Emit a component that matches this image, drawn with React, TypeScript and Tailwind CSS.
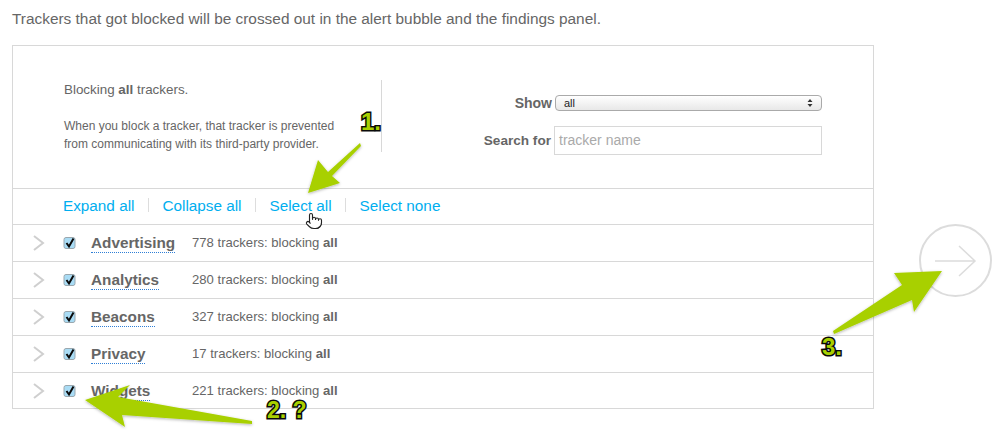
import { Pointer } from "lucide-react";

const categories = [
  { name: "Advertising", count: 778 },
  { name: "Analytics", count: 280 },
  { name: "Beacons", count: 327 },
  { name: "Privacy", count: 17 },
  { name: "Widgets", count: 221 },
];

const actions = ["Expand all", "Collapse all", "Select all", "Select none"];

function CheckBox() {
  return (
    <svg width="13" height="14" viewBox="0 0 13 14" className="shrink-0">
      <rect x="1" y="1.5" width="11" height="11" rx="2" fill="#a9dcf5" stroke="#9aa7ae" />
      <path d="M3.5 7 L6 10.5 L10.5 2.5" fill="none" stroke="#0a0a0a" strokeWidth="2" />
    </svg>
  );
}

function CategoryRow({ name, count }: { name: string; count: number }) {
  return (
    <div className="flex items-center h-[37px] border-t border-[#d8d8d8] last:h-[36px]">
      <svg width="14" height="18" viewBox="0 0 14 18" className="ml-[19px] shrink-0">
        <path d="M2 2 L11 9 L2 16" fill="none" stroke="#cfcfcf" strokeWidth="2" />
      </svg>
      <div className="ml-[17px]">
        <CheckBox />
      </div>
      <div className="ml-[15px] w-[101px]">
        <span className="text-[15.3px] font-bold text-[#666] border-b border-dotted border-[#2f7fd6] leading-[19px] inline-block">
          {name}
        </span>
      </div>
      <span className="text-[13.1px] text-[#666]">
        {count} trackers: blocking <b>all</b>
      </span>
    </div>
  );
}

function NumberLabel({ text, className }: { text: string; className: string }) {
  return (
    <span
      className={`absolute font-bold text-[#a8d000] leading-none [-webkit-text-stroke:3px_#0a0a0a] [paint-order:stroke_fill] ${className}`}
    >
      {text}
    </span>
  );
}

export default function App() {
  return (
    <div className="relative w-[1000px] h-[437px] overflow-hidden bg-white font-['Liberation_Sans',Arial,sans-serif] text-[#666]">
      <p className="pl-3 pt-[9px] text-[15.4px] leading-[20px] h-[45px]">
        Trackers that got blocked will be crossed out in the alert bubble and the findings panel.
      </p>

      <div className="flex items-start pl-3">
        <div className="w-[862px] border border-[#d8d8d8]">
          {/* Header */}
          <div className="flex h-[142px] pt-[34px]">
            <div className="w-[369px] h-[72px] pl-[51px] border-r border-[#d8d8d8]">
              <p className="leading-[18px] text-[13.4px] pt-px">
                Blocking <b>all</b> trackers.
              </p>
              <p className="mt-[18px] text-[12px] leading-[18px]">
                When you block a tracker, that tracker is prevented
                <br />
                from communicating with its third-party provider.
              </p>
            </div>
            <div className="flex-1 flex flex-col items-end pr-[51px] pt-[15px]">
              <div className="flex items-center h-[16px]">
                <span className="text-[14px] font-bold mr-[3px]">Show</span>
                <div className="w-[267px] h-[16px] flex items-center justify-between px-2 rounded-[4px] border border-[#aaa] bg-gradient-to-b from-white to-[#e8e8e8] text-[11px] text-[#222]">
                  <span>all</span>
                  <svg width="6" height="10" viewBox="0 0 6 10">
                    <path d="M3 1 L5.5 4 H0.5 Z M3 9 L5.5 6 H0.5 Z" fill="#333" />
                  </svg>
                </div>
              </div>
              <div className="flex items-center mt-[15px]">
                <span className="text-[13.6px] font-bold mr-[3px] pt-px">Search for</span>
                <div className="w-[268px] h-[29px] border border-[#d8d8d8] pl-[4px] flex items-center text-[14px] text-[#aaa]">
                  tracker name
                </div>
              </div>
            </div>
          </div>

          {/* Actions */}
          <div className="flex items-center h-[36px] pl-[50px] border-t border-[#d8d8d8] text-[15.3px] text-[#00aeef]">
            {actions.map((label, i) => (
              <span key={label} className="flex items-center">
                {i > 0 && <span className="w-px h-[14px] bg-[#ddd] mx-[13.5px] -mt-[3px]" />}
                <a>{label}</a>
              </span>
            ))}
          </div>

          {categories.map((c) => (
            <CategoryRow key={c.name} name={c.name} count={c.count} />
          ))}
        </div>

        {/* Next */}
        <div className="ml-[45px] mt-[179px] w-[73px] h-[73px] rounded-full border-2 border-[#dcdcdc] flex items-center justify-center shrink-0">
          <svg width="44" height="34" viewBox="0 0 44 34">
            <path d="M1 17 H41 M25 2 L41 17 L25 32" fill="none" stroke="#dcdcdc" strokeWidth="1.5" />
          </svg>
        </div>
      </div>

      {/* Annotations drawn over the page */}
      <svg width="1000" height="437" viewBox="0 0 1000 437" className="absolute inset-0 pointer-events-none">
        <defs>
          <filter id="arrowShadow" x="-20%" y="-20%" width="140%" height="140%">
            <feDropShadow dx="0" dy="1" stdDeviation="1.5" floodColor="#000" floodOpacity="0.3" />
          </filter>
        </defs>
        <g fill="#a8d000" filter="url(#arrowShadow)">
          <path d="M360 143 L328 172 L318 160 L308 193 L340 183 L332 176 L361 146 Z" />
          <path d="M85 400 L130 385 L118 397 L252 421 L252 424 L122 415 L125 427 Z" />
          <path d="M833 331 L902 285 L894 273 L942 271 L914 312 L912 300 L834 334 Z" />
        </g>
      </svg>
      <NumberLabel text="1." className="left-[361px] top-[110px] text-[24px]" />
      <NumberLabel text="2. ?" className="left-[267px] top-[399px] text-[23px]" />
      <NumberLabel text="3." className="left-[822px] top-[335px] text-[24px]" />
      <Pointer size={18} className="absolute left-[305px] top-[212px] text-[#222] fill-white" strokeWidth={1.5} />
    </div>
  );
}
